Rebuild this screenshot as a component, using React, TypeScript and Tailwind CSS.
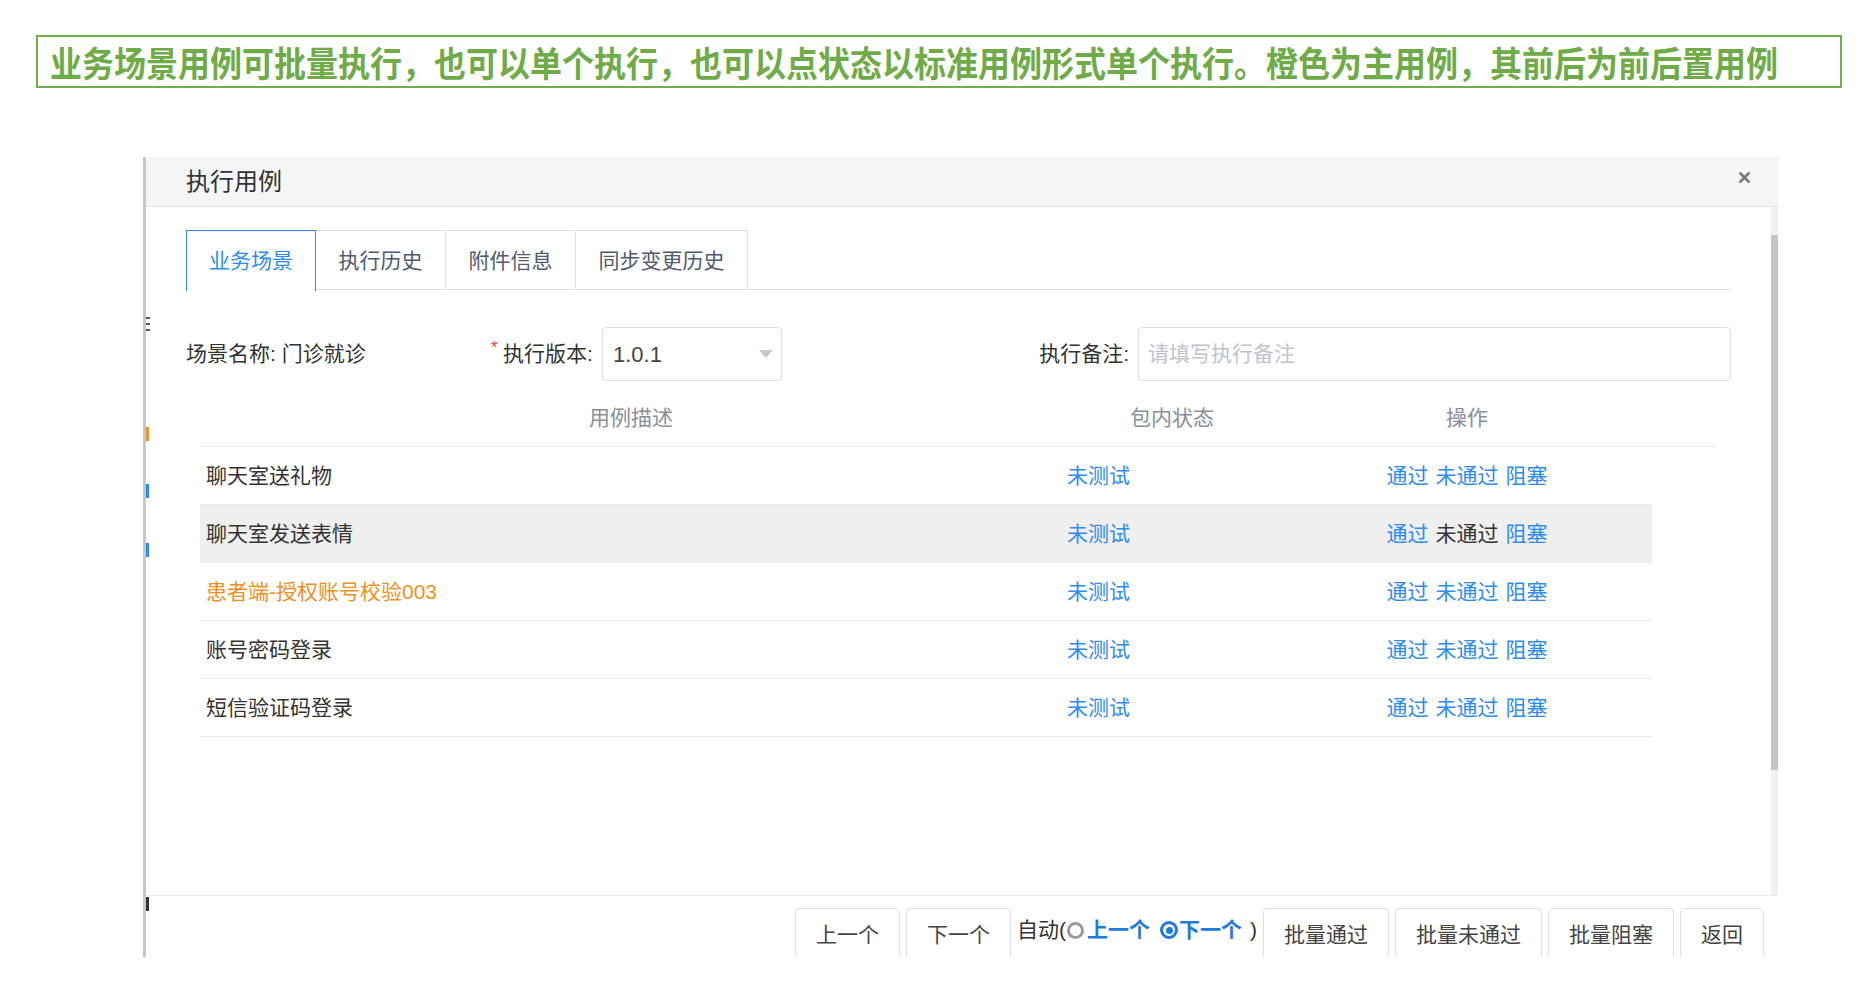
import { X } from "lucide-react";

const rows = [
  { name: "聊天室送礼物", main: false, hover: false },
  { name: "聊天室发送表情", main: false, hover: true },
  { name: "患者端-授权账号校验003", main: true, hover: false },
  { name: "账号密码登录", main: false, hover: false },
  { name: "短信验证码登录", main: false, hover: false },
];

const tabs = ["业务场景", "执行历史", "附件信息", "同步变更历史"];

const footerButtons = ["批量通过", "批量未通过", "批量阻塞", "返回"];

export default function App() {
  return (
    <div className="w-[1871px] h-[1005px] overflow-hidden bg-white pt-[35px] font-['Liberation_Sans','Noto_Sans_CJK_SC',sans-serif] text-[21px] text-[#333]">
      {/* Note banner */}
      <div className="ml-[36px] flex h-[53px] w-[1806px] items-center border-2 border-[#72ad4c] pl-[12px]">
        <span className="inline-block origin-left scale-y-[1.1] font-['Noto_Sans_CJK_SC',sans-serif] text-[32px] font-bold leading-none text-[#6fab47]">
          业务场景用例可批量执行，也可以单个执行，也可以点状态以标准用例形式单个执行。橙色为主用例，其前后为前后置用例
        </span>
      </div>

      {/* Modal */}
      <div className="relative mt-[69px] ml-[143px] flex h-[800px] w-[1635px] flex-col overflow-hidden border-l-[3px] border-[#c6c6c6]">
        {/* bits of the page behind, peeking out at the left edge */}
        <span className="absolute left-0 top-[160px] h-[2px] w-[4px] bg-[#555]" />
        <span className="absolute left-0 top-[166px] h-[2px] w-[4px] bg-[#555]" />
        <span className="absolute left-0 top-[172px] h-[2px] w-[4px] bg-[#555]" />
        <span className="absolute left-0 top-[270px] h-[14px] w-[3px] bg-[#e8962c]" />
        <span className="absolute left-0 top-[327px] h-[14px] w-[3px] bg-[#2d8cf0]" />
        <span className="absolute left-0 top-[386px] h-[14px] w-[3px] bg-[#2d8cf0]" />
        <span className="absolute left-0 top-[740px] h-[14px] w-[3px] bg-[#333]" />

        {/* Header */}
        <div className="flex h-[50px] shrink-0 items-center justify-between border-b border-[#e3e5e8] bg-[#f4f5f7] pb-[4px] pl-[40px] pr-[25px]">
          <span className="font-['Noto_Sans_CJK_SC',sans-serif] text-[24px] text-[#333]">执行用例</span>
          <X size={17} strokeWidth={3.5} className="-translate-y-[2px] text-[#7a7a7a]" />
        </div>

        {/* Body */}
        <div className="flex h-[688px] shrink-0">
          <div className="flex-1 pl-[40px] pr-[40px] pt-[23px]">
            {/* Tabs */}
            <div className="flex h-[60px] border-b border-[#dcdee2]">
              {tabs.map((t, i) => (
                <div
                  key={t}
                  className={
                    i === 0
                      ? "-mb-px flex h-[61px] w-[130px] items-center justify-center border border-b-0 border-[#2d8cf0] bg-white text-[#2d8cf0]"
                      : `flex h-[60px] items-center justify-center border-t border-r border-[#dcdee2] text-[#515a6e] ${i === 3 ? "w-[172px]" : "w-[130px]"}`
                  }
                >
                  {t}
                </div>
              ))}
            </div>

            {/* Form row */}
            <div className="mt-[37px] flex h-[54px] items-center">
              <span className="w-[305px]">场景名称: 门诊就诊</span>
              <span className="w-[12px] -translate-y-[6px] text-[17px] text-[#ed4014]">*</span>
              <span className="w-[99px]">执行版本:</span>
              <div className="flex h-[54px] w-[180px] items-center justify-between rounded-[4px] border border-[#dcdee2] pl-[10px] pr-[8px]">
                <span className="text-[22px] text-[#444]">1.0.1</span>
                <span className="h-0 w-0 border-x-[7px] border-t-[8px] border-x-transparent border-t-[#c5c8ce]" />
              </div>
              <div className="flex-1" />
              <span className="mr-[9px]">执行备注:</span>
              <div className="flex h-[54px] w-[593px] items-center rounded-[4px] border border-[#dcdee2] pl-[9px] text-[#c0c4cc]">
                请填写执行备注
              </div>
            </div>

            {/* Table */}
            <div className="mt-[8px] ml-[14px] mr-[15px]">
              <div className="flex h-[58px] items-center border-b border-[#e8eaec] text-[#8a8f99]">
                <div className="w-[862px] text-center">用例描述</div>
                <div className="w-[220px] text-center">包内状态</div>
                <div className="w-[370px] text-center">操作</div>
              </div>
              {rows.map((r) => (
                <div
                  key={r.name}
                  className={`flex h-[58px] w-[1452px] items-center border-b border-[#e8eaec] ${r.hover ? "bg-[#efefef]" : ""}`}
                >
                  <div className={`w-[862px] pl-[6px] ${r.main ? "text-[#f0901e]" : "text-[#333]"}`}>{r.name}</div>
                  <div className="w-[220px] pl-[5px] text-[#2d8cf0]">未测试</div>
                  <div className="flex w-[370px] justify-center gap-[7px] text-[#2d8cf0]">
                    <span>通过</span>
                    <span className={r.hover ? "text-[#333]" : ""}>未通过</span>
                    <span>阻塞</span>
                  </div>
                </div>
              ))}
            </div>
          </div>

          {/* Scrollbar */}
          <div className="w-[7px] bg-[#f1f1f1] pt-[28px]">
            <div className="h-[535px] w-full bg-[#c4c4c4]" />
          </div>
        </div>

        {/* Footer */}
        <div className="flex flex-1 justify-end gap-[6px] border-t border-[#e8eaec] pr-[14px] pt-[12px]">
          <button className="h-[54px] rounded-t-[4px] border border-[#dcdee2] bg-white px-[20px] text-[#444]">上一个</button>
          <button className="h-[54px] rounded-t-[4px] border border-[#dcdee2] bg-white px-[20px] text-[#444]">下一个</button>
          <div className="flex h-[44px] items-center text-[#333]">
            <span>自动(</span>
            <span className="ml-[1px] h-[17px] w-[17px] rounded-full border-[3px] border-[#999]" />
            <span className="ml-[3px] font-bold text-[#1f7ae0]">上一个</span>
            <span className="ml-[10px] flex h-[18px] w-[18px] items-center justify-center rounded-full border-[3px] border-[#1f7ae0]">
              <span className="h-[7px] w-[7px] rounded-full bg-[#1f7ae0]" />
            </span>
            <span className="ml-[1px] font-bold text-[#1f7ae0]">下一个</span>
            <span className="ml-[8px]">)</span>
          </div>
          {footerButtons.map((b) => (
            <button key={b} className="h-[54px] rounded-t-[4px] border border-[#dcdee2] bg-white px-[20px] text-[#444]">
              {b}
            </button>
          ))}
        </div>
      </div>
    </div>
  );
}
